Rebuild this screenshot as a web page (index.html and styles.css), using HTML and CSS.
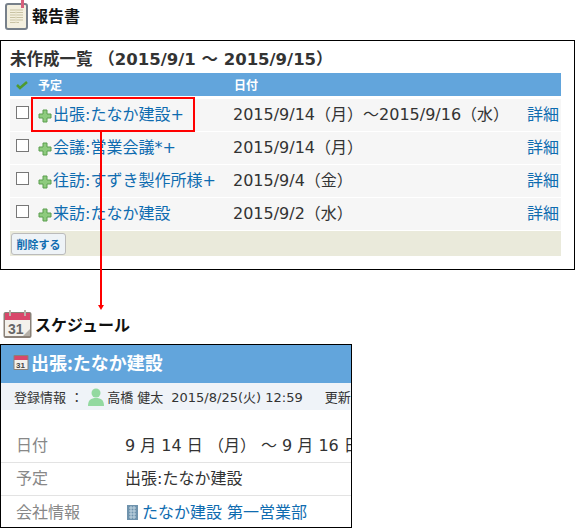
FILE: index.html
```html
<!DOCTYPE html>
<html lang="ja">
<head>
  <meta charset="UTF-8">
  <title>報告書</title>
  <link rel="stylesheet" href="styles.css">
</head>
<body>
  <div class="page">
    <h2 class="section-title first">
      <svg class="icon-report" width="24" height="31" viewBox="0 0 24 31">
        <rect x="1" y="4" width="21" height="25" rx="2" fill="#f4f0df" stroke="#77808a" stroke-width="2"/>
        <path d="M5 10h13M5 12.500h13M5 15h13M5 17.500h13M5 20h13M5 22.500h9" stroke="#c9c3a4" stroke-width="1"/>
        <path d="M11 10v13" stroke="#e6e1c8" stroke-width="1"/>
        <rect x="16" y="0" width="3" height="8" fill="#d8607c"/>
      </svg>
      報告書
    </h2>

    <div class="report-box">
      <h3 class="report-title">未作成一覧 （2015/9/1 ～ 2015/9/15）</h3>
      <div class="report-head">
        <svg class="check" width="12" height="10" viewBox="0 0 12 10"><path d="M1 5l3 3 7-6" fill="none" stroke="#4f9a2f" stroke-width="2.500"/></svg>
        <span class="col-name">予定</span>
        <span class="col-date">日付</span>
      </div>
      <div class="report-row">
        <span class="checkbox"></span>
        <span class="col-name"><svg class="plus" width="14" height="14" viewBox="0 0 14 14"><use href="#plus"/></svg><a>出張:たなか建設+</a></span>
        <span class="col-date">2015/9/14（月）～2015/9/16（水）</span>
        <a class="col-more">詳細</a>
      </div>
      <div class="report-row">
        <span class="checkbox"></span>
        <span class="col-name"><svg class="plus" width="14" height="14" viewBox="0 0 14 14"><use href="#plus"/></svg><a>会議:営業会議*+</a></span>
        <span class="col-date">2015/9/14（月）</span>
        <a class="col-more">詳細</a>
      </div>
      <div class="report-row">
        <span class="checkbox"></span>
        <span class="col-name"><svg class="plus" width="14" height="14" viewBox="0 0 14 14"><use href="#plus"/></svg><a>往訪:すずき製作所様+</a></span>
        <span class="col-date">2015/9/4（金）</span>
        <a class="col-more">詳細</a>
      </div>
      <div class="report-row">
        <span class="checkbox"></span>
        <span class="col-name"><svg class="plus" width="14" height="14" viewBox="0 0 14 14"><use href="#plus"/></svg><a>来訪:たなか建設</a></span>
        <span class="col-date">2015/9/2（水）</span>
        <a class="col-more">詳細</a>
      </div>
      <div class="report-foot">
        <button class="btn-delete">削除する</button>
      </div>
    </div>

    <h2 class="section-title second">
      <svg class="icon-cal" width="29" height="28" viewBox="0 0 29 28">
        <rect x="0.500" y="2" width="28" height="26" rx="2" fill="#8a8178"/>
        <rect x="2" y="10" width="25" height="16" fill="#f3f1ec"/>
        <rect x="2" y="3" width="25" height="7" fill="#d9476a"/>
        <rect x="6" y="0" width="2" height="6" fill="#b9b3aa"/>
        <rect x="21" y="0" width="2" height="6" fill="#b9b3aa"/>
        <path d="M20 26l7-7v7z" fill="#b5b0a8"/>
        <text x="5" y="24" class="cal-num">31</text>
      </svg>
      スケジュール
    </h2>

    <div class="schedule-box">
      <div class="schedule-head">
        <svg class="icon-cal-small" width="16" height="16" viewBox="0 0 16 16">
          <rect x="0.500" y="1" width="15" height="15" rx="1" fill="#8a8178"/>
          <rect x="1.500" y="6" width="13" height="9" fill="#f3f1ec"/>
          <rect x="1.500" y="2" width="13" height="4" fill="#d9476a"/>
          <text x="3" y="14" class="cal-num-small">31</text>
        </svg>
        <span>出張:たなか建設</span>
      </div>
      <div class="schedule-info">
        <span>登録情報 ：</span>
        <svg class="icon-user" width="16" height="18" viewBox="0 0 16 18"><circle cx="8" cy="5" r="4.500" fill="#93d9a0"/><path d="M0 18c0-6 3-8 8-8s8 2 8 8z" fill="#93d9a0"/></svg>
        <span class="info-name">高橋 健太</span>
        <span class="info-date">2015/8/25(火) 12:59</span>
        <span class="info-more">更新者</span>
      </div>
      <div class="schedule-rows">
        <div class="schedule-row date-row"><span class="label">日付</span><span class="value date-value">9 月 14 日 （月） ～ 9 月 16 日 （水）</span></div>
        <div class="schedule-row"><span class="label">予定</span><span class="value">出張:たなか建設</span></div>
        <div class="schedule-row last"><span class="label">会社情報</span><span class="value"><svg class="icon-building" width="11" height="15" viewBox="0 0 11 15"><rect width="11" height="15" fill="#6f93ad"/><path d="M2 3h7M2 6h7M2 9h7M2 12h7M4 1v13M7 1v13" stroke="#c3d6e2" stroke-width="1"/></svg><a>たなか建設 第一営業部</a></span></div>
      </div>
    </div>

    <div class="callout"></div>
    <div class="callout-line"></div>
    <div class="callout-arrow"></div>
  </div>

  <svg width="0" height="0" class="defs">
    <symbol id="plus" viewBox="0 0 14 14">
      <path d="M5 1h4v4h4v4H9v4H5V9H1V5h4z" fill="#8ecb7e" stroke="#5a9e4f" stroke-width="1"/>
    </symbol>
  </svg>
</body>
</html>
```

FILE: styles.css
```css
html, body {
  margin: 0;
  padding: 0;
  background: white;
}

body {
  font-family: "DejaVu Sans", "Noto Sans CJK JP", sans-serif;
  color: #333;
}

a {
  color: #0f6cb0;
}

.page {
  position: relative;
  width: 575px;
  height: 528px;
  overflow: hidden;
}

.defs {
  position: absolute;
}

.section-title {
  display: flex;
  align-items: center;
  margin: 0;
  font-family: "Noto Sans CJK JP", sans-serif;
  font-size: 16px;
  font-weight: 700;
  color: #111;
}

.section-title.first {
  height: 40px;
  padding: 0 0 10px 5px;
  box-sizing: border-box;
  gap: 3px;
}

.section-title.second {
  height: 30px;
  margin: 39px 0 5px 3px;
  gap: 3px;
}

.cal-num {
  font-family: "Liberation Sans", sans-serif;
  font-size: 14px;
  font-weight: 700;
  fill: #666;
}

.cal-num-small {
  font-family: "Liberation Sans", sans-serif;
  font-size: 8px;
  font-weight: 700;
  fill: #444;
}

.report-box {
  box-sizing: border-box;
  height: 230px;
  border: 1px solid #000;
  padding: 0 13px 0 9px;
}

.report-title {
  margin: 0;
  height: 32px;
  line-height: 37px;
  font-size: 16.500px;
  font-weight: 700;
  color: #333;
  white-space: nowrap;
}

.report-head {
  display: flex;
  align-items: center;
  height: 23px;
  margin-bottom: 3px;
  background: #62a5dc;
  color: white;
  font-size: 12px;
  font-weight: 700;
  font-family: "Noto Sans CJK JP", sans-serif;
}

.check {
  margin-left: 6px;
  flex: none;
}

.report-head .col-name {
  margin-left: 10px;
  width: 196px;
}

.report-row {
  display: flex;
  align-items: center;
  box-sizing: border-box;
  height: 32px;
  padding-bottom: 5px;
  margin-bottom: 1px;
  background: #f6f6f6;
  font-size: 16px;
}

.checkbox {
  flex: none;
  box-sizing: border-box;
  width: 13px;
  height: 13px;
  margin-left: 6px;
  border: 1px solid #777;
  background: white;
}

.report-row .col-name {
  display: flex;
  align-items: center;
  flex: none;
  width: 195px;
  margin-left: 9px;
  white-space: nowrap;
}

.plus {
  flex: none;
  margin: 6px 1px 0 0;
}

.col-date {
  flex: 1;
  white-space: nowrap;
}

.col-more {
  flex: none;
  margin-right: 2px;
}

.report-foot {
  display: flex;
  align-items: center;
  height: 25px;
  background: #eaeadb;
  padding-left: 1px;
}

.btn-delete {
  height: 22px;
  width: 55px;
  padding: 0;
  border: 1px solid #bbb;
  border-radius: 3px;
  background: #eef3f7;
  color: #0f6cb0;
  font-family: "Noto Sans CJK JP", sans-serif;
  font-size: 11px;
  font-weight: 700;
}

.schedule-box {
  box-sizing: border-box;
  width: 352px;
  height: 184px;
  border: 1px solid #000;
  overflow: hidden;
}

.schedule-head {
  display: flex;
  align-items: center;
  gap: 2px;
  box-sizing: border-box;
  height: 38px;
  padding: 0 0 4px 12px;
  background: #62a5dc;
  color: white;
  font-family: "Noto Sans CJK JP", sans-serif;
  font-size: 18px;
  font-weight: 700;
}

.schedule-info {
  display: flex;
  align-items: center;
  height: 27px;
  padding-left: 13px;
  background: #eff3f8;
  font-size: 13px;
  white-space: nowrap;
}

.icon-user {
  flex: none;
  margin: 0 3px 0 5px;
}

.info-date {
  margin-left: 8px;
}

.info-more {
  margin-left: 22px;
}

.schedule-rows {
  padding-top: 19px;
}

.schedule-row {
  display: flex;
  align-items: center;
  box-sizing: border-box;
  height: 33px;
  padding-bottom: 4px;
  border-bottom: 1px solid #e3e3e3;
  font-size: 16px;
  white-space: nowrap;
}

.schedule-row.date-row {
  height: 34px;
}

.schedule-row.last {
  border-bottom: 0;
}

.label {
  flex: none;
  width: 109px;
  margin-left: 15px;
  color: #888;
  font-family: "Noto Sans CJK JP", sans-serif;
  font-size: 16px;
}

.value {
  display: flex;
  align-items: center;
  gap: 4px;
}

.date-value {
  font-size: 16px;
}

.icon-building {
  flex: none;
  margin: 3px 0 0 2px;
}

.callout {
  position: absolute;
  left: 31px;
  top: 97px;
  box-sizing: border-box;
  width: 164px;
  height: 35px;
  border: 2px solid #f00;
}

.callout-line {
  position: absolute;
  left: 100px;
  top: 132px;
  width: 2px;
  height: 174px;
  background: #f00;
}

.callout-arrow {
  position: absolute;
  left: 98px;
  top: 305px;
  width: 0;
  height: 0;
  border-left: 3px solid transparent;
  border-right: 3px solid transparent;
  border-top: 5px solid #f00;
}
```
